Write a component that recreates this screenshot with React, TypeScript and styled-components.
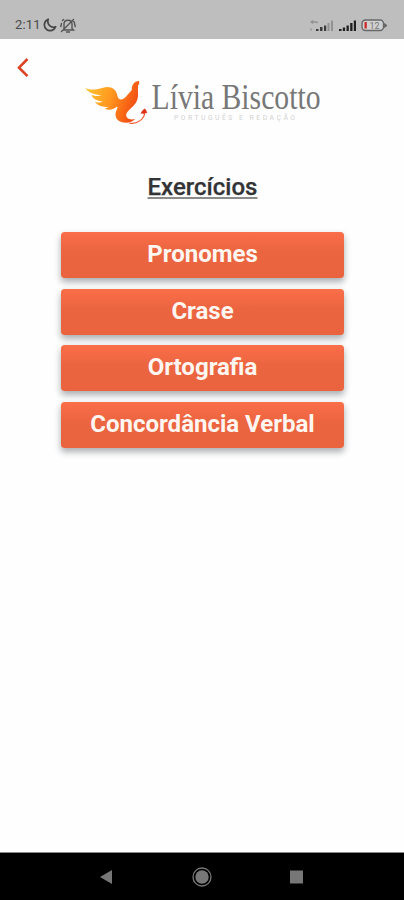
import React from 'react';
import styled, { createGlobalStyle } from 'styled-components';

const GlobalStyle = createGlobalStyle`
  *, *::before, *::after { box-sizing: border-box; }
  body { margin: 0; background: #fff; font-family: Roboto, sans-serif; }
`;

const Screen = styled.div`
  display: flex;
  flex-direction: column;
  height: 900px;
  width: 100%;
  background: #fefefe;
  overflow: hidden;
`;

const StatusBar = styled.header`
  flex: none;
  display: flex;
  align-items: center;
  justify-content: space-between;
  height: 39px;
  padding: 11px 16px 0 15px;
  background: #bebebe;
  color: #4b4b4b;
`;

const StatusGroup = styled.div<{ $gap: number }>`
  display: flex;
  align-items: center;
  gap: ${({ $gap }) => $gap}px;
  svg { display: block; }
`;

const Clock = styled.span`
  width: 25px;
  font-size: 13px;
  line-height: 16px;
  letter-spacing: 0.2px;
  white-space: nowrap;
`;

const Content = styled.main`
  flex: 1;
  display: flex;
  flex-direction: column;
`;

const TopRow = styled.div`
  display: grid;
  grid-template-columns: 83px 240px;
  height: 91px;
`;

const BackButton = styled.button`
  display: block;
  width: 24px;
  height: 28px;
  margin: 15px 0 0 11px;
  padding: 0;
  border: 0;
  background: none;
  svg { display: block; }
`;

const Brand = styled.svg`
  display: block;
  margin-top: 36px;
`;

const Title = styled.h1`
  align-self: center;
  margin: 43px 0 0;
  padding-left: 1px;
  height: 28px;
  color: #333436;
  font-size: 24px;
  font-weight: 500;
  line-height: 28px;
  -webkit-text-stroke: 0.25px #333436;
  text-decoration: underline;
  text-decoration-color: #8b8b8b;
  text-decoration-thickness: 1.5px;
  text-decoration-skip-ink: none;
  text-underline-offset: 1.5px;
`;

const ExerciseList = styled.nav`
  display: flex;
  flex-direction: column;
  gap: 10.5px;
  width: 283px;
  margin: 31px 0 0 61px;
`;

const ExerciseButton = styled.button`
  height: 46px;
  padding: 0 0 2px;
  border: 0;
  border-radius: 3.5px;
  background: linear-gradient(#fa704b 0, #f76c47 10%, #ec6541 40%, #e8633e 100%);
  box-shadow: 0 4px 6px rgba(40, 50, 55, 0.32), 0 3px 9px rgba(40, 50, 55, 0.1);
  color: #fff6f1;
  font: 700 24px/28px Roboto, sans-serif;
`;

const NavigationBar = styled.footer`
  flex: none;
  display: grid;
  grid-template-columns: 24px 24px 24px;
  column-gap: 71px;
  justify-content: center;
  align-items: center;
  height: 48px;
  border-top: 1px solid #8b8b8b;
  background: #000;
  svg { display: block; }
`;

const exercises = ['Pronomes', 'Crase', 'Ortografia', 'Concordância Verbal'];

const MoonIcon = () => (
  <svg width="14" height="14" viewBox="0 0 14 14" fill="none" stroke="#454545" strokeWidth="1.7" strokeLinejoin="round">
    <path d="M5.2 1.2C.8 3 .2 8.6 3.5 11.3c3.3 2.6 7.900 1 9.200-2.500C8.200 10.500 3.500 6.800 5.200 1.200Z" />
  </svg>
);

const MutedBellIcon = () => (
  <svg width="16" height="15" viewBox="0 0 16 15" fill="none" stroke="#555" strokeWidth="1.4" strokeLinecap="round">
    <path d="M4 10.500V6c0-5 8-5 8 0v4.500l1.500 1.500H3M6.500 14h3M1.500 13.500l12-12M1.500 5.500L.8 8.500M14.500 5.500l.7 3M2.500 2.500l1-1M13.500 3.500l1 1" />
  </svg>
);

const SignalIcons = () => (
  <svg width="47" height="15" viewBox="0 0 47 15">
    <path d="M1 10.500v2M1 4h6M3 2.500L1 4l2 1.500M5.500 3.500L8 5" stroke="#929292" strokeWidth="1.300" fill="none" />
    <g fill="#3c3c3c">
      <path d="M6 11h2.500v2H6zM10 9h2.500v4H10zM14 7.500h2.200V13H14z" />
      <path fill="#929292" d="M17.500 5h2v8h-2zM21 2.500h2V13h-2z" />
    </g>
    <path fill="#202020" d="M29 11h2.500v2H29zM32.800 9.500h2.300V13h-2.300zM36.500 7.500h2.300V13h-2.300zM40.200 5h2.300v8h-2.300zM43.800 2.500H46V13h-2.200z" />
  </svg>
);

const BatteryIcon = () => (
  <svg width="27" height="13" viewBox="0 0 27 13">
    <rect x="1" y="1" width="21.500" height="10.500" rx="3.500" fill="#d0d0d0" stroke="#686868" strokeWidth="1.400" />
    <path d="M23.500 4.500v4l2.500-2z" fill="#686868" stroke="#686868" />
    <path d="M3.500 3h2.300v6.500H3.500z" fill="#ce2929" />
    <text x="8.500" y="9.800" fill="#777" fontFamily="Roboto, sans-serif" fontSize="9">12</text>
  </svg>
);

const BrandLogo = () => (
  <Brand width="240" height="54" viewBox="83 75 240 54" aria-label="Lívia Biscotto">
    <defs>
      <linearGradient id="flame" x1="86" y1="92" x2="140" y2="110" gradientUnits="userSpaceOnUse">
        <stop offset="0" stopColor="#ffc12e" />
        <stop offset="0.45" stopColor="#ff961f" />
        <stop offset="0.72" stopColor="#f96a15" />
        <stop offset="1" stopColor="#ed3f17" />
      </linearGradient>
    </defs>
    <path fill="url(#flame)" d="M85 88c6 2.500 12 1.500 18-.3 7-2 13.500 1 14.500 8.500 1.500 5 6 3.500 9-.2l5.300-6c-.2-5 2-8.500 7.200-8.900l.3 2.400-1.200 2c-.6 6 .9 10-1.100 15-2 5.500-8.500 9-10.500 13-1.500 4.500 3 7 8.500 5.500-4 5.500-19.500 5.500-19.500-4.500 0-4 3-7 1.500-8-3 3-8 4.500-12.500 2 2-.2 3.500-1 4-1.800-5 .8-10.500-.7-13.500-4.700 3 .8 6 .5 8-.8-6 0-10.500-2.500-11.500-6.500 3 1.500 7 1.800 10 .5-7-.2-13-2.700-16.500-7.200Z" />
    <path d="M129 123c8 1.500 15.500-3.500 15.800-11" fill="none" stroke="#ef5730" strokeWidth="1.200" />
    <path fill="#df351c" d="M144.700 108.500c-2 1.500-3.700 3.500-4.200 5.400 1.300-.6 2.500-.5 3.500.2.600-1.100 1.900-1.400 3.200-.7-.2-2-1-3.500-2.500-4.900Z" />
    <text x="151.500" y="109" textLength="169" lengthAdjust="spacingAndGlyphs" fill="#777" fontFamily="Liberation Serif, serif" fontSize="35.500">Lívia Biscotto</text>
    <text x="174" y="120" textLength="121" lengthAdjust="spacing" fill="#d1d1d1" fontFamily="Roboto, sans-serif" fontSize="6.800">PORTUGUÊS E REDAÇÃO</text>
  </Brand>
);

export default function App() {
  return (
    <Screen>
      <GlobalStyle />
      <StatusBar>
        <StatusGroup $gap={3}>
          <Clock>2:11</Clock>
          <MoonIcon />
          <MutedBellIcon />
        </StatusGroup>
        <StatusGroup $gap={4}>
          <SignalIcons />
          <BatteryIcon />
        </StatusGroup>
      </StatusBar>
      <Content>
        <TopRow>
          <BackButton aria-label="Voltar">
            <svg width="24" height="28" viewBox="0 0 24 28" fill="none">
              <path d="M16.500 5L8 13.700l8.500 8.500" stroke="#dc4325" strokeWidth="2.600" />
            </svg>
          </BackButton>
          <BrandLogo />
        </TopRow>
        <Title>Exercícios</Title>
        <ExerciseList>
          {exercises.map((name) => (
            <ExerciseButton key={name}>{name}</ExerciseButton>
          ))}
        </ExerciseList>
      </Content>
      <NavigationBar>
        <svg width="24" height="24" viewBox="0 0 24 24"><path d="M5 12l12-7v14z" fill="#777" /></svg>
        <svg width="24" height="24" viewBox="0 0 24 24">
          <circle cx="12" cy="12" r="9" fill="none" stroke="#777" strokeWidth="1.300" />
          <circle cx="12" cy="12" r="6.700" fill="#777" />
        </svg>
        <svg width="24" height="24" viewBox="0 0 24 24"><path d="M5 5.500h13v13H5z" fill="#777" /></svg>
      </NavigationBar>
    </Screen>
  );
}
